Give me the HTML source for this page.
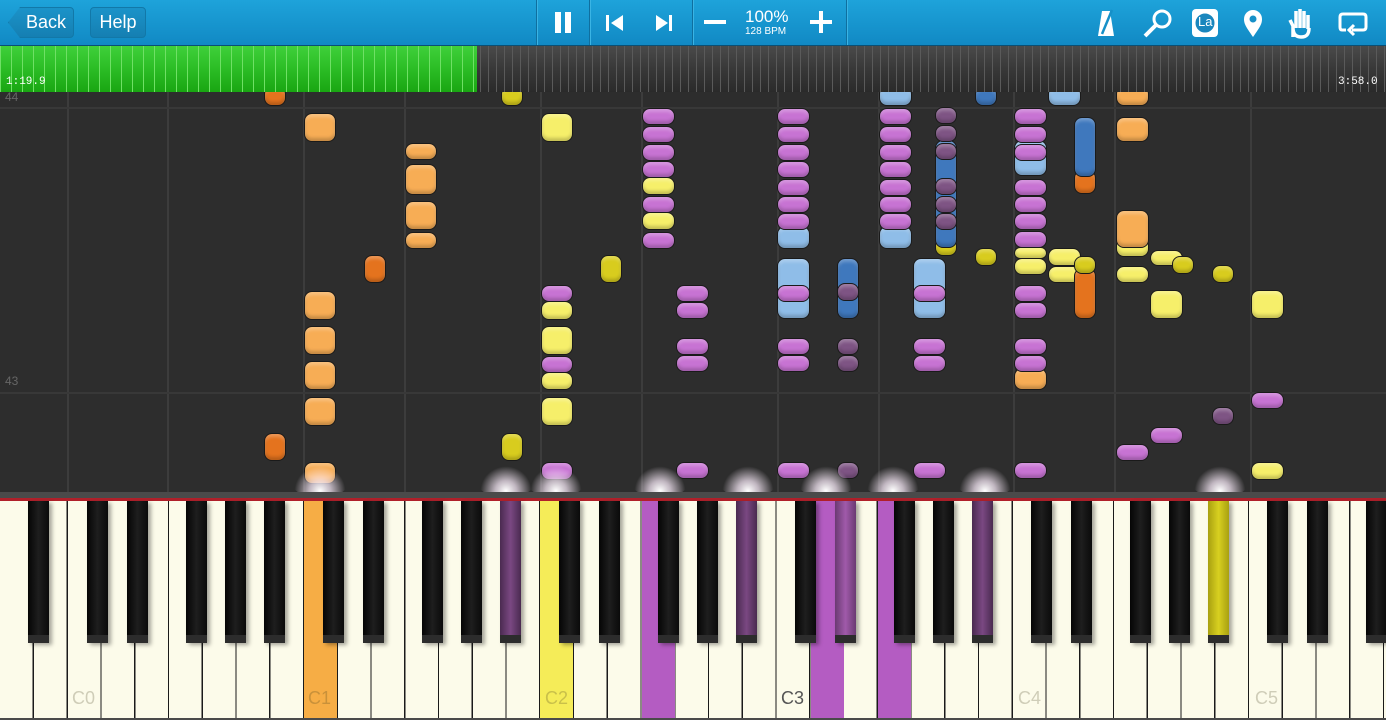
<!DOCTYPE html>
<html><head><meta charset="utf-8"><style>
*{margin:0;padding:0;box-sizing:border-box}
body{width:1386px;height:720px;overflow:hidden;background:#2b2b2b;font-family:"Liberation Sans",sans-serif;position:relative}
.tb{position:absolute;left:0;top:0;width:1386px;height:46px;background:linear-gradient(#1ea3da,#1189c4);border-bottom:1px solid #0a4f74}
.btn{position:absolute;top:7px;height:31px;border-radius:4px;background:linear-gradient(#1b93c9,#157fb2);border:1px solid #1278a8;color:#fff;font-size:18px;line-height:29px;text-align:center}
.sep{position:absolute;top:0;width:1px;height:45px;background:#0f6f9f;box-shadow:1px 0 0 #3ab4e4}
.seek{position:absolute;left:0;top:46px;width:1386px;height:46px;background:repeating-linear-gradient(90deg,#5a5a5a 0 1px,transparent 1px 8px),linear-gradient(#4a4a4a,#383838 50%,#2a2a2a)}
.green{position:absolute;left:0;top:46px;width:477px;height:46px;background:repeating-linear-gradient(90deg,#6fe065 0 1px,transparent 1px 11px),linear-gradient(#3fd03a,#2bbd25 50%,#19a612)}
.t{position:absolute;color:#fff;font-family:"Liberation Mono",monospace;font-size:11px}
.roll{position:absolute;left:0;top:92px;width:1386px;height:400px;background:#2d2d2d;overflow:hidden}
.vl{position:absolute;top:0;width:2px;height:400px;background:#3c3c3c}
.hl{position:absolute;left:0;width:1386px;height:2px;background:#383838}
.n{position:absolute;border-radius:8px;border:1.5px solid #1a1a1a;box-shadow:inset 0 -3px 3px rgba(0,0,0,.2),inset 0 3px 3px rgba(255,255,255,.25)}
.o{background:#f7ad55}.O{background:#e4731e}.y{background:#f6ef6a}.Y{background:#d8cc1e}.p{background:#c773d3}.P{background:#7e5484}.b{background:#8fbde8}.B{background:#3f78bd}
.glow{position:absolute;width:60px;height:36px;border-radius:50%;background:radial-gradient(ellipse at 50% 80%,rgba(255,255,255,1),rgba(255,240,255,.7) 25%,rgba(255,255,255,0) 60%)}
.kb{position:absolute;left:0;top:492px;width:1386px;height:228px;background:#4a4a4a}
.wk{position:absolute;left:0;top:501px;width:1386px;height:217px;background:repeating-linear-gradient(90deg,#fcfbea 0 32.25px,#1a1a1a 32.25px 33.75px);background-position:0.5px 0}
.pw{position:absolute;top:501px;width:32.5px;height:217px}
.bk{position:absolute;top:501px;width:21px;height:142px;background:linear-gradient(90deg,#050505,#1e1e1e 50%,#0a0a0a);border-bottom:8px solid #2c2c2c;box-shadow:3px 2px 4px rgba(0,0,0,.35)}
.lbl{position:absolute;top:688px;font-size:18px;color:#cfcdb8}
</style></head><body>
<div class="tb"></div>
<div class="btn" style="left:8px;width:66px;border-radius:4px 4px 4px 4px;padding-left:10px;clip-path:polygon(12px 0,100% 0,100% 100%,12px 100%,0 50%)">Back</div>
<div class="btn" style="left:90px;width:56px">Help</div>
<div class="sep" style="left:536px"></div><div class="sep" style="left:589px"></div><div class="sep" style="left:692px"></div><div class="sep" style="left:846px"></div>
<div style="position:absolute;left:555px;top:12px;width:6px;height:21px;background:#fff"></div><div style="position:absolute;left:565px;top:12px;width:6px;height:21px;background:#fff"></div>
<svg style="position:absolute;left:605px;top:14px" width="20" height="18"><rect x="1" y="1" width="3" height="16" fill="#fff"/><path d="M18 1 L6 9 L18 17Z" fill="#fff"/></svg>
<svg style="position:absolute;left:654px;top:14px" width="20" height="18"><rect x="15" y="1" width="3" height="16" fill="#fff"/><path d="M2 1 L14 9 L2 17Z" fill="#fff"/></svg>
<div style="position:absolute;left:704px;top:20px;width:22px;height:4px;background:#fff"></div>
<div style="position:absolute;left:745px;top:7px;color:#fff;font-size:17px">100%</div>
<div style="position:absolute;left:745px;top:26px;color:#fff;font-size:10px">128 BPM</div>
<div style="position:absolute;left:810px;top:20px;width:22px;height:4px;background:#fff"></div><div style="position:absolute;left:819px;top:11px;width:4px;height:22px;background:#fff"></div>
<svg style="position:absolute;left:1090px;top:6px" width="290" height="34" fill="none" stroke="#fff" stroke-width="3">
<path d="M12 5 L20 5 L24 30 L8 30 Z" fill="#fff" stroke="none"/><path d="M12 28 L22 4" stroke="#1690c8" stroke-width="2.5"/>
<circle cx="72" cy="13" r="8"/><path d="M66 19 L55 30" stroke-width="4"/>
<rect x="102" y="3" width="26" height="28" rx="4" fill="#fff" stroke="none"/><circle cx="115" cy="17" r="10" fill="#1a86bd" stroke="#fff" stroke-width="1"/>
<path d="M163 31 C156 21 154 18 154 13 A9 9 0 0 1 172 13 C172 18 170 21 163 31Z" fill="#fff" stroke="none"/><circle cx="163" cy="13" r="3.5" fill="#1690c8" stroke="none"/>
<path d="M203 31 L203 20 L200 14 M206 22 L206 5 M210 22 L210 3 M214 22 L214 5 M218 23 L218 9 M203 22 C203 28 206 31 211 31 C217 31 219 28 219 22" stroke-width="3.5"/>
<path d="M256 24 L252 24 Q250 24 250 21 L250 11 Q250 8 253 8 L273 8 Q276 8 276 11 L276 21 Q276 24 273 24 L262 24"/><path d="M264 19 L259 24 L264 29" />
</svg>
<div style="position:absolute;left:1198px;top:14px;color:#fff;font-size:13px;font-family:'Liberation Sans'">La</div>
<div class="seek"></div><div class="green"></div>
<div class="t" style="left:6px;top:76px">1:19.9</div><div class="t" style="left:1338px;top:76px">3:58.0</div>
<div class="roll">
<div class="vl" style="left:67px"></div><div class="vl" style="left:167px"></div><div class="vl" style="left:303px"></div><div class="vl" style="left:404px"></div><div class="vl" style="left:540px"></div><div class="vl" style="left:641px"></div><div class="vl" style="left:777px"></div><div class="vl" style="left:878px"></div><div class="vl" style="left:1013px"></div><div class="vl" style="left:1114px"></div><div class="vl" style="left:1250px"></div>
<div class="hl" style="top:15px"></div><div class="hl" style="top:300px"></div>
<div style="position:absolute;left:5px;top:-2px;color:#666;font-size:12px">44</div>
<div style="position:absolute;left:5px;top:282px;color:#666;font-size:12px">43</div>
</div>
<div style="position:absolute;left:0;top:92px;width:1386px;height:400px;overflow:hidden">
<div style="position:relative;top:-92px">
<div class="n O" style="left:264px;top:86px;width:22px;height:20px"></div>
<div class="n o" style="left:304px;top:113px;width:32px;height:29px"></div>
<div class="n o" style="left:405px;top:143px;width:32px;height:17px"></div><div class="n o" style="left:405px;top:164px;width:32px;height:31px"></div><div class="n o" style="left:405px;top:201px;width:32px;height:29px"></div><div class="n o" style="left:405px;top:232px;width:32px;height:17px"></div>
<div class="n O" style="left:364px;top:255px;width:22px;height:28px"></div>
<div class="n o" style="left:304px;top:291px;width:32px;height:29px"></div><div class="n o" style="left:304px;top:326px;width:32px;height:29px"></div><div class="n o" style="left:304px;top:361px;width:32px;height:29px"></div><div class="n o" style="left:304px;top:397px;width:32px;height:29px"></div>
<div class="n O" style="left:264px;top:433px;width:22px;height:28px"></div>
<div class="n o" style="left:304px;top:462px;width:32px;height:22px"></div>
<div class="n Y" style="left:501px;top:86px;width:22px;height:20px"></div>
<div class="n y" style="left:541px;top:113px;width:32px;height:29px"></div>
<div class="n Y" style="left:600px;top:255px;width:22px;height:28px"></div>
<div class="n p" style="left:541px;top:285px;width:32px;height:17px"></div><div class="n y" style="left:541px;top:301px;width:32px;height:19px"></div><div class="n y" style="left:541px;top:326px;width:32px;height:29px"></div><div class="n p" style="left:541px;top:356px;width:32px;height:17px"></div><div class="n y" style="left:541px;top:372px;width:32px;height:18px"></div><div class="n y" style="left:541px;top:397px;width:32px;height:29px"></div>
<div class="n Y" style="left:501px;top:433px;width:22px;height:28px"></div>
<div class="n p" style="left:541px;top:462px;width:32px;height:18px"></div>
<div class="n p" style="left:642px;top:108px;width:33px;height:17px"></div><div class="n p" style="left:642px;top:126px;width:33px;height:17px"></div><div class="n p" style="left:642px;top:144px;width:33px;height:17px"></div><div class="n p" style="left:642px;top:161px;width:33px;height:17px"></div><div class="n y" style="left:642px;top:177px;width:33px;height:18px"></div><div class="n p" style="left:642px;top:196px;width:33px;height:17px"></div><div class="n y" style="left:642px;top:212px;width:33px;height:18px"></div><div class="n p" style="left:642px;top:232px;width:33px;height:17px"></div>
<div class="n p" style="left:676px;top:285px;width:33px;height:17px"></div><div class="n p" style="left:676px;top:302px;width:33px;height:17px"></div><div class="n p" style="left:676px;top:338px;width:33px;height:17px"></div><div class="n p" style="left:676px;top:355px;width:33px;height:17px"></div><div class="n p" style="left:676px;top:462px;width:33px;height:17px"></div>
<div class="n b" style="left:777px;top:226px;width:33px;height:23px"></div>
<div class="n p" style="left:777px;top:108px;width:33px;height:17px"></div><div class="n p" style="left:777px;top:126px;width:33px;height:17px"></div><div class="n p" style="left:777px;top:144px;width:33px;height:17px"></div><div class="n p" style="left:777px;top:161px;width:33px;height:17px"></div><div class="n p" style="left:777px;top:179px;width:33px;height:17px"></div><div class="n p" style="left:777px;top:196px;width:33px;height:17px"></div><div class="n p" style="left:777px;top:213px;width:33px;height:17px"></div>
<div class="n b" style="left:777px;top:258px;width:33px;height:61px"></div><div class="n p" style="left:777px;top:285px;width:33px;height:17px"></div>
<div class="n p" style="left:777px;top:338px;width:33px;height:17px"></div><div class="n p" style="left:777px;top:355px;width:33px;height:17px"></div><div class="n p" style="left:777px;top:462px;width:33px;height:17px"></div>
<div class="n B" style="left:837px;top:258px;width:22px;height:61px"></div><div class="n P" style="left:837px;top:283px;width:22px;height:18px"></div>
<div class="n P" style="left:837px;top:338px;width:22px;height:17px"></div><div class="n P" style="left:837px;top:355px;width:22px;height:17px"></div><div class="n P" style="left:837px;top:462px;width:22px;height:17px"></div>
<div class="n b" style="left:879px;top:86px;width:33px;height:20px"></div>
<div class="n b" style="left:879px;top:226px;width:33px;height:23px"></div>
<div class="n p" style="left:879px;top:108px;width:33px;height:17px"></div><div class="n p" style="left:879px;top:126px;width:33px;height:17px"></div><div class="n p" style="left:879px;top:144px;width:33px;height:17px"></div><div class="n p" style="left:879px;top:161px;width:33px;height:17px"></div><div class="n p" style="left:879px;top:179px;width:33px;height:17px"></div><div class="n p" style="left:879px;top:196px;width:33px;height:17px"></div><div class="n p" style="left:879px;top:213px;width:33px;height:17px"></div>
<div class="n Y" style="left:935px;top:238px;width:22px;height:18px"></div>
<div class="n B" style="left:935px;top:140px;width:22px;height:108px"></div>
<div class="n P" style="left:935px;top:107px;width:22px;height:17px"></div><div class="n P" style="left:935px;top:125px;width:22px;height:17px"></div><div class="n P" style="left:935px;top:143px;width:22px;height:17px"></div><div class="n P" style="left:935px;top:178px;width:22px;height:17px"></div><div class="n P" style="left:935px;top:196px;width:22px;height:17px"></div><div class="n P" style="left:935px;top:213px;width:22px;height:17px"></div>
<div class="n b" style="left:913px;top:258px;width:33px;height:61px"></div><div class="n p" style="left:913px;top:285px;width:33px;height:17px"></div>
<div class="n p" style="left:913px;top:338px;width:33px;height:17px"></div><div class="n p" style="left:913px;top:355px;width:33px;height:17px"></div><div class="n p" style="left:913px;top:462px;width:33px;height:17px"></div>
<div class="n B" style="left:975px;top:86px;width:22px;height:20px"></div>
<div class="n Y" style="left:975px;top:248px;width:22px;height:18px"></div>
<div class="n b" style="left:1014px;top:140px;width:33px;height:36px"></div>
<div class="n p" style="left:1014px;top:108px;width:33px;height:17px"></div><div class="n p" style="left:1014px;top:126px;width:33px;height:17px"></div><div class="n p" style="left:1014px;top:144px;width:33px;height:17px"></div><div class="n p" style="left:1014px;top:179px;width:33px;height:17px"></div><div class="n p" style="left:1014px;top:196px;width:33px;height:17px"></div><div class="n p" style="left:1014px;top:213px;width:33px;height:17px"></div><div class="n p" style="left:1014px;top:231px;width:33px;height:17px"></div>
<div class="n y" style="left:1014px;top:247px;width:33px;height:12px"></div><div class="n y" style="left:1014px;top:258px;width:33px;height:17px"></div>
<div class="n p" style="left:1014px;top:285px;width:33px;height:17px"></div><div class="n p" style="left:1014px;top:302px;width:33px;height:17px"></div>
<div class="n o" style="left:1014px;top:368px;width:33px;height:22px"></div>
<div class="n p" style="left:1014px;top:338px;width:33px;height:17px"></div><div class="n p" style="left:1014px;top:355px;width:33px;height:17px"></div><div class="n p" style="left:1014px;top:462px;width:33px;height:17px"></div>
<div class="n b" style="left:1048px;top:86px;width:33px;height:20px"></div>
<div class="n y" style="left:1048px;top:248px;width:33px;height:18px"></div><div class="n y" style="left:1048px;top:266px;width:33px;height:17px"></div>
<div class="n O" style="left:1074px;top:170px;width:22px;height:24px"></div>
<div class="n B" style="left:1074px;top:117px;width:22px;height:60px"></div>
<div class="n O" style="left:1074px;top:268px;width:22px;height:51px"></div>
<div class="n Y" style="left:1074px;top:256px;width:22px;height:18px"></div>
<div class="n o" style="left:1116px;top:86px;width:33px;height:20px"></div>
<div class="n o" style="left:1116px;top:117px;width:33px;height:25px"></div>
<div class="n y" style="left:1116px;top:238px;width:33px;height:19px"></div>
<div class="n o" style="left:1116px;top:210px;width:33px;height:38px"></div>
<div class="n y" style="left:1116px;top:266px;width:33px;height:17px"></div>
<div class="n p" style="left:1116px;top:444px;width:33px;height:17px"></div>
<div class="n y" style="left:1150px;top:250px;width:33px;height:16px"></div>
<div class="n y" style="left:1150px;top:290px;width:33px;height:29px"></div>
<div class="n p" style="left:1150px;top:427px;width:33px;height:17px"></div>
<div class="n Y" style="left:1172px;top:256px;width:22px;height:18px"></div>
<div class="n Y" style="left:1212px;top:265px;width:22px;height:18px"></div>
<div class="n P" style="left:1212px;top:407px;width:22px;height:18px"></div>
<div class="n y" style="left:1251px;top:290px;width:33px;height:29px"></div>
<div class="n p" style="left:1251px;top:392px;width:33px;height:17px"></div>
<div class="n y" style="left:1251px;top:462px;width:33px;height:18px"></div>
<div class="glow" style="left:290px;top:462px"></div><div class="glow" style="left:476px;top:462px"></div><div class="glow" style="left:526px;top:462px"></div><div class="glow" style="left:630px;top:462px"></div><div class="glow" style="left:718px;top:462px"></div><div class="glow" style="left:796px;top:462px"></div><div class="glow" style="left:863px;top:462px"></div><div class="glow" style="left:955px;top:462px"></div><div class="glow" style="left:1190px;top:462px"></div>
</div></div>
<div class="kb"></div>
<div style="position:absolute;left:0;top:498px;width:1386px;height:3px;background:#b0202a"></div>
<div class="wk"></div>
<div class="pw" style="left:304px;background:#f6ad45"></div>
<div class="pw" style="left:540px;background:#f5ec58"></div>
<div class="pw" style="left:642px;background:#b45cc2"></div>
<div class="pw" style="left:811px;background:#b45cc2"></div>
<div class="pw" style="left:878px;background:#b45cc2"></div>
<div class="bk" style="left:28px"></div>
<div class="bk" style="left:87px"></div><div class="bk" style="left:127px"></div><div class="bk" style="left:186px"></div><div class="bk" style="left:225px"></div><div class="bk" style="left:264px"></div>
<div class="bk" style="left:323px"></div><div class="bk" style="left:363px"></div><div class="bk" style="left:422px"></div><div class="bk" style="left:461px"></div><div class="bk" style="left:500px;background:linear-gradient(90deg,#4a2a50,#7a4882,#4a2a50)"></div>
<div class="bk" style="left:559px"></div><div class="bk" style="left:599px"></div><div class="bk" style="left:658px"></div><div class="bk" style="left:697px"></div><div class="bk" style="left:736px;background:linear-gradient(90deg,#4a2a50,#7a4882,#4a2a50)"></div>
<div class="bk" style="left:795px"></div><div class="bk" style="left:835px;background:linear-gradient(90deg,#6a3a72,#a05aaa,#6a3a72)"></div><div class="bk" style="left:894px"></div><div class="bk" style="left:933px"></div><div class="bk" style="left:972px;background:linear-gradient(90deg,#4a2a50,#7a4882,#4a2a50)"></div>
<div class="bk" style="left:1031px"></div><div class="bk" style="left:1071px"></div><div class="bk" style="left:1130px"></div><div class="bk" style="left:1169px"></div><div class="bk" style="left:1208px;background:linear-gradient(90deg,#a8a010,#d8d020,#a8a010)"></div>
<div class="bk" style="left:1267px"></div><div class="bk" style="left:1307px"></div><div class="bk" style="left:1366px"></div>
<div class="lbl" style="left:72px">C0</div><div class="lbl" style="left:308px;color:#c9913a">C1</div><div class="lbl" style="left:545px;color:#c9c04a">C2</div><div class="lbl" style="left:781px;color:#555">C3</div><div class="lbl" style="left:1018px">C4</div><div class="lbl" style="left:1255px">C5</div>
</body></html>
